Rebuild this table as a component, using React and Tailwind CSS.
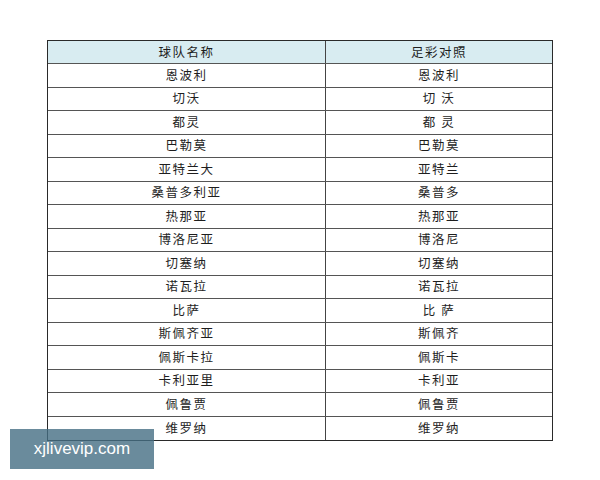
import React from 'react';

const rows = [
  ['恩波利', '恩波利'],
  ['切沃', '切 沃'],
  ['都灵', '都 灵'],
  ['巴勒莫', '巴勒莫'],
  ['亚特兰大', '亚特兰'],
  ['桑普多利亚', '桑普多'],
  ['热那亚', '热那亚'],
  ['博洛尼亚', '博洛尼'],
  ['切塞纳', '切塞纳'],
  ['诺瓦拉', '诺瓦拉'],
  ['比萨', '比 萨'],
  ['斯佩齐亚', '斯佩齐'],
  ['佩斯卡拉', '佩斯卡'],
  ['卡利亚里', '卡利亚'],
  ['佩鲁贾', '佩鲁贾'],
  ['维罗纳', '维罗纳'],
];

const cell = 'flex items-center justify-center tracking-[1.5px] whitespace-pre';

const App = () => {
  return (
    <div className="relative w-[600px] h-[480px] bg-white overflow-hidden font-['Noto_Sans_CJK_SC',sans-serif] text-[12.5px] text-[#1e1e1e]">
      <div className="pt-[40px] pl-[47px]">
        <div className="w-[506px] border border-[#2a2a2a]">
          <div className="grid grid-cols-[278px_1fr] h-[23px] bg-[#d8ecf1] border-b border-[#555]">
            <div className={`${cell} border-r border-[#444]`}>球队名称</div>
            <div className={cell}>足彩对照</div>
          </div>
          {rows.map(([a, b], i) => (
            <div
              key={i}
              className={`grid grid-cols-[278px_1fr] h-[23.5px] ${i < rows.length - 1 ? 'border-b border-[#555]' : ''}`}
            >
              <div className={`${cell} border-r border-[#444]`}>{a}</div>
              <div className={cell}>{b}</div>
            </div>
          ))}
        </div>
      </div>
      {/* watermark */}
      <div className="absolute left-[10px] top-[429px] w-[144px] h-[40px] bg-[#456e83]/80 flex items-center justify-center">
        <span className="font-['Liberation_Sans',sans-serif] text-[17px] text-white">xjlivevip.com</span>
      </div>
    </div>
  );
};

export default App;
